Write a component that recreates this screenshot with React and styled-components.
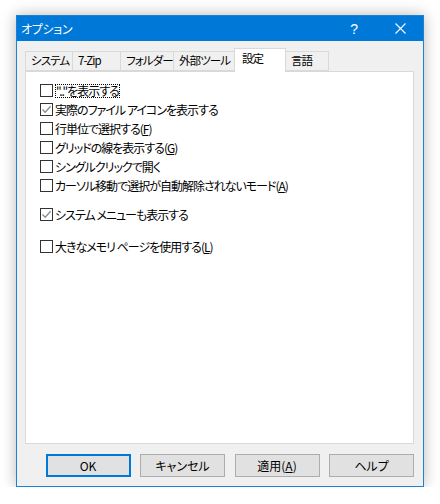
import styled, { createGlobalStyle } from 'styled-components'

const Global = createGlobalStyle`
    body{
        margin: 0;
        background: #FFFFFF;
        font-family: "Noto Sans CJK JP", "Noto Sans", sans-serif;
        font-feature-settings: "palt";
    }
`

const tabs = [
    { label: "システム", w: 48 },
    { label: "7-Zip", w: 49 },
    { label: "フォルダー", w: 54 },
    { label: "外部ツール", w: 62 },
    { label: "設定", w: 52, active: true },
    { label: "言語", w: 44 },
];

export default function App(){
    return (
        <>
            <Global />
            <Window>
                <TitleBar>
                    <span>オプション</span>
                    <TitleButtons>
                        <Help>?</Help>
                        <Close>
                            <svg width="11" height="11" viewBox="0 0 11 11">
                                <path d="M0.5 0.5 L10.5 10.5 M10.5 0.5 L0.5 10.5" stroke="#FFFFFF" strokeWidth="1.1" />
                            </svg>
                        </Close>
                    </TitleButtons>
                </TitleBar>
                <Body>
                    <Tabs>
                        {tabs.map((t)=>
                            <Tab key={t.label} $w={t.w} $active={t.active}>{t.label}</Tab>
                        )}
                    </Tabs>
                    <Panel>
                        <Row>
                            <Box />
                            <Focus>".."を表示する</Focus>
                        </Row>
                        <Row>
                            <Box><Check /></Box>
                            <span>実際のファイル アイコンを表示する</span>
                        </Row>
                        <Row>
                            <Box />
                            <span>行単位で選択する(<u>F</u>)</span>
                        </Row>
                        <Row>
                            <Box />
                            <span>グリッドの線を表示する(<u>G</u>)</span>
                        </Row>
                        <Row>
                            <Box />
                            <span>シングルクリックで開く</span>
                        </Row>
                        <Row>
                            <Box />
                            <span>カーソル移動で選択が自動解除されないモード(<u>A</u>)</span>
                        </Row>
                        <Row $top={10}>
                            <Box><Check /></Box>
                            <span>システム メニューも表示する</span>
                        </Row>
                        <Row $top={13}>
                            <Box />
                            <span>大きなメモリ ページを使用する(<u>L</u>)</span>
                        </Row>
                    </Panel>
                    <Buttons>
                        <Button $default>OK</Button>
                        <Button>キャンセル</Button>
                        <Button>適用(<u>A</u>)</Button>
                        <Button>ヘルプ</Button>
                    </Buttons>
                </Body>
            </Window>
        </>
    )
}

function Check(){
    return (
        <svg width="11" height="11" viewBox="0 0 11 11">
            <path d="M1.5 5.5 L4.2 8.3 L9.6 2.2" stroke="#8a8a8a" strokeWidth="1.3" fill="none" />
        </svg>
    )
}

const Window = styled.div`
    margin: 15px 0 0 16px;
    width: 408px;
    height: 472px;
    box-sizing: border-box;
    border: 1px solid #1883D7;
    background: #F0F0F0;
    box-shadow: 0 0 14px rgba(0,0,0,0.28);
    display: flex;
    flex-direction: column;
`

const TitleBar = styled.div`
    height: 25px;
    background: #0078D7;
    color: #FFFFFF;
    display: flex;
    align-items: center;
    justify-content: space-between;
    padding-left: 4px;
    font-size: 12px;
    letter-spacing: -0.3px;
`

const TitleButtons = styled.div`
    display: flex;
    align-items: center;
`

const Help = styled.div`
    width: 46px;
    text-align: center;
    font-family: "Liberation Sans", sans-serif;
    font-size: 14px;
`

const Close = styled.div`
    width: 46px;
    display: flex;
    justify-content: center;
    align-items: center;
`

const Body = styled.div`
    padding: 7px 9px 0 8px;
    display: flex;
    flex-direction: column;
`

const Tabs = styled.div`
    display: flex;
    align-items: flex-end;
    padding-left: 1px;
    height: 23px;
    position: relative;
    z-index: 1;
`

const Tab = styled.div`
    width: ${p => p.$w}px;
    height: ${p => p.$active ? 24 : 20}px;
    box-sizing: border-box;
    border: 1px solid #D9D9D9;
    border-bottom: ${p => p.$active ? 'none' : '1px solid #D9D9D9'};
    margin-left: -1px;
    background: ${p => p.$active ? '#FFFFFF' : '#F0F0F0'};
    font-size: 11.5px;
    letter-spacing: -0.9px;
    line-height: ${p => p.$active ? 18 : 17}px;
    padding-left: ${p => p.$active ? 7 : 5}px;
    color: #000000;
    white-space: nowrap;
    margin-bottom: ${p => p.$active ? -1 : 0}px;
`

const Panel = styled.div`
    height: 373px;
    box-sizing: border-box;
    border: 1px solid #D9D9D9;
    background: #FFFFFF;
    padding: 9px 0 0 14px;
    display: flex;
    flex-direction: column;
`

const Row = styled.div`
    height: 19px;
    display: flex;
    align-items: center;
    gap: 2px;
    margin-top: ${p => p.$top || 0}px;
    font-size: 12px;
    letter-spacing: -1px;
    color: #000000;
    white-space: nowrap;
    u{
        text-underline-offset: 1px;
    }
`

const Box = styled.div`
    width: 13px;
    height: 13px;
    box-sizing: border-box;
    border: 1px solid #333333;
    background: #FFFFFF;
    display: flex;
    align-items: center;
    justify-content: center;
    flex-shrink: 0;
`

const Focus = styled.span`
    outline: 1px dotted #000000;
    outline-offset: -1px;
    padding: 0 1px;
    line-height: 14px;
`

const Buttons = styled.div`
    display: flex;
    justify-content: flex-end;
    gap: 9.5px;
    margin-top: 10px;
`

const Button = styled.div`
    width: 85px;
    height: 23px;
    box-sizing: border-box;
    background: #E1E1E1;
    border: ${p => p.$default ? '2px solid #0078D7' : '1px solid #ADADAD'};
    display: flex;
    align-items: center;
    justify-content: center;
    font-size: 12px;
    color: #000000;
`
